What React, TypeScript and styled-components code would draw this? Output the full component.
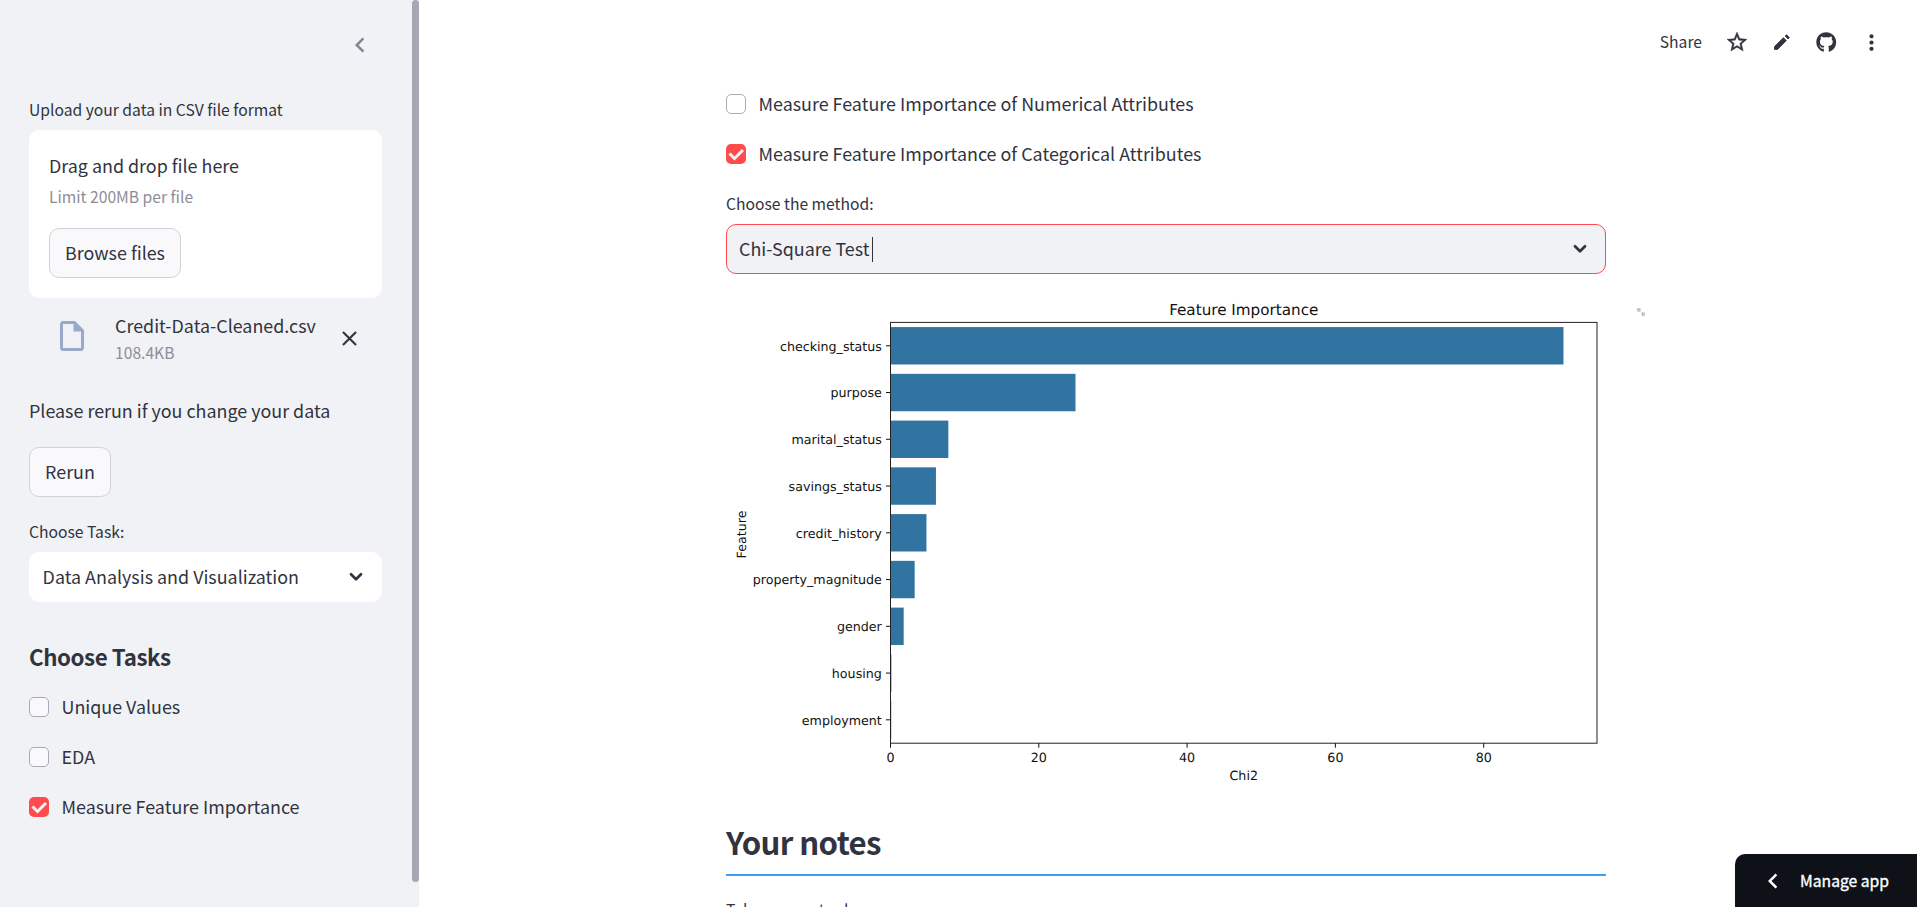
import React from 'react';
import styled, { createGlobalStyle } from 'styled-components';
import { MdChevronLeft, MdClose, MdMoreVert, MdOutlineInsertDriveFile, MdStarOutline } from 'react-icons/md';
import { FaGithub } from 'react-icons/fa';

const ink = '#31333f';
const panel = '#f0f2f6';
const red = '#ff4b4b';
const barBlue = '#3274a1';

const GlobalStyle = createGlobalStyle`
  *, *::before, *::after { box-sizing: border-box; }
  html, body { margin: 0; height: 100%; overflow: hidden; background: #fff; }
  body {
    color: ${ink};
    font-family: "Noto Sans CJK SC", "Noto Sans", sans-serif;
    font-size: 17.9px;
    line-height: 30px;
  }
  svg { display: block; flex: none; }
`;

const Page = styled.div`
  position: relative;
  display: flex;
  width: 100%;
  height: 907px;
  overflow: hidden;
`;

const Sidebar = styled.aside`
  display: flex;
  justify-content: space-between;
  width: 419px;
  height: 100%;
  flex: none;
  background: ${panel};
`;

const SidebarContent = styled.div`
  display: flex;
  flex-direction: column;
  align-items: flex-start;
  width: 353px;
  margin-left: 29px;
`;

const ScrollThumb = styled.div`
  width: 7px;
  height: 882px;
  border-radius: 4px;
  background: #a6a7b0;
`;

const CollapseButton = styled.div`
  align-self: flex-end;
  margin: 30px 7px 0 0;
  color: #808495;
`;

const Label = styled.div<{ $top?: number }>`
  margin-top: ${p => p.$top ?? 0}px;
  height: 28px;
  font-size: 15.66px;
  line-height: 28px;
  white-space: nowrap;
`;

const DropCard = styled.div`
  width: 100%;
  height: 168px;
  margin-top: 6px;
  padding: 20px;
  border-radius: 10px;
  background: #fff;
`;

const Line = styled.div<{ $top?: number }>`
  height: 32px;
  margin-top: ${p => p.$top ?? 0}px;
  white-space: nowrap;
`;

const Muted = styled.div<{ $line: number }>`
  height: 28px;
  font-size: 15.66px;
  line-height: ${p => p.$line}px;
  color: #8d8e95;
`;

const Button = styled.div<{ $width: number; $top: number }>`
  display: flex;
  align-items: center;
  justify-content: center;
  width: ${p => p.$width}px;
  height: 50px;
  margin-top: ${p => p.$top}px;
  padding-bottom: 2px;
  border: 1px solid #d2d3d8;
  border-radius: 10px;
  background: #f9f9fb;
  white-space: nowrap;
`;

const FileRow = styled.div`
  display: flex;
  align-items: flex-start;
  width: 100%;
  height: 77px;
  padding: 12px 20px 0 25px;
`;

const FileIcon = styled.div`
  margin-top: 8px;
  color: #99a9c9;
`;

const FileInfo = styled.div`
  flex: 1;
  margin-left: 25px;
`;

const RemoveIcon = styled.div`
  margin-top: 16px;
`;

const Select = styled.div<{ $focused?: boolean }>`
  display: flex;
  align-items: center;
  justify-content: space-between;
  width: 100%;
  height: 50px;
  margin-top: 6px;
  padding: 0 18px 0 ${p => (p.$focused ? 12 : 12.6)}px;
  border: 1px solid ${p => (p.$focused ? red : '#fff')};
  border-radius: 10px;
  background: ${p => (p.$focused ? panel : '#fff')};
`;

const SelectValue = styled.div`
  display: flex;
  align-items: center;
  gap: 3px;
  padding-bottom: 2px;
  white-space: nowrap;
`;

const Caret = styled.span`
  width: 1px;
  height: 25px;
  margin-top: 2px;
  background: ${ink};
`;

const GroupTitle = styled.h3`
  margin: 41px 0 0;
  font-size: 22.3px;
  font-weight: 700;
  letter-spacing: -0.42px;
  line-height: 26px;
  height: 30px;
`;

const Checks = styled.div<{ $top: number }>`
  display: flex;
  flex-direction: column;
  gap: 18px;
  margin-top: ${p => p.$top}px;
`;

const CheckRow = styled.div`
  display: flex;
  align-items: center;
  gap: 12.5px;
  height: 32px;
  white-space: nowrap;
`;

const CheckText = styled.span`
  padding-bottom: 2px;
`;

const Box = styled.span<{ $on?: boolean; $fill: string }>`
  display: flex;
  align-items: center;
  justify-content: center;
  width: 20px;
  height: 20px;
  border: ${p => (p.$on ? 'none' : '1px solid #a9aab1')};
  border-radius: 5px;
  background: ${p => (p.$on ? red : p.$fill)};
`;

const Main = styled.main`
  flex: 1;
  height: 100%;
  overflow: hidden;
`;

const Block = styled.div`
  width: 880px;
  margin-left: 307px;
`;

const ChartFrame = styled.div`
  position: relative;
  margin-top: 20px;
`;

const Expand = styled.div`
  position: absolute;
  top: 14px;
  left: 911px;
`;

const NotesTitle = styled.h2`
  margin: 26px 0 0;
  height: 59px;
  border-bottom: 2px solid #3d9df3;
  font-size: 31.2px;
  font-weight: 700;
  letter-spacing: -0.62px;
  line-height: 50px;
`;

const Toolbar = styled.div`
  position: absolute;
  top: 28px;
  right: 33px;
  display: flex;
  align-items: center;
  height: 28px;
`;

const Share = styled.span`
  margin-right: 2px;
  font-size: 15.66px;
  line-height: 28px;
`;

const ToolIcon = styled.span`
  display: flex;
  align-items: center;
  justify-content: center;
  width: 25px;
  height: 28px;
  margin-left: 20px;
`;

const Manage = styled.div`
  position: absolute;
  right: 0;
  bottom: 0;
  display: flex;
  align-items: center;
  width: 182px;
  height: 53px;
  padding-left: 23px;
  gap: 12px;
  border-top-left-radius: 10px;
  background: #0e1117;
  color: #fff;
  font-size: 15.7px;
  -webkit-text-stroke: 0.35px #fff;
  white-space: nowrap;
`;

const ArrowDown = () => (
  <svg width="14" height="10" viewBox="0 0 14 10" fill="none" stroke={ink} strokeWidth="2.7" strokeLinecap="round" strokeLinejoin="round">
    <path d="M2 2.2 7 7.2 12 2.2" />
  </svg>
);

const Pencil = () => (
  <svg width="16" height="16" viewBox="0 0 16 16" fill={ink} stroke={ink} strokeWidth="0.8" strokeLinejoin="round">
    <path d="M.5 15.500v-3L9.400 3.700l2.900 2.900-8.800 8.900zM11.100 2.100 12.500.700l2.900 2.900L14 5z" />
  </svg>
);

const Check = ({ label, on, fill }: { label: string; on?: boolean; fill: string }) => (
  <CheckRow>
    <Box $on={on} $fill={fill}>
      {on && (
        <svg width="17" height="13" viewBox="0 0 17 13" fill={panel}>
          <path d="M6.5 12.6.4 6.6 2.6 4.4 6.5 8.4 13.9.9 16.1 3.1Z" />
        </svg>
      )}
    </Box>
    <CheckText>{label}</CheckText>
  </CheckRow>
);

const data = [
  { name: 'checking_status', value: 90.76 },
  { name: 'purpose', value: 24.95 },
  { name: 'marital_status', value: 7.8 },
  { name: 'savings_status', value: 6.13 },
  { name: 'credit_history', value: 4.85 },
  { name: 'property_magnitude', value: 3.26 },
  { name: 'gender', value: 1.78 },
  { name: 'housing', value: 0.12 },
  { name: 'employment', value: 0.1 },
];

const axis = { left: 164.5, right: 871, top: 28.4, bottom: 449.2 };
const unit = 7.415;
const step = (axis.bottom - axis.top) / data.length;

const Chart = () => (
  <svg width="880" height="497" viewBox="0 0 880 497" fontFamily='"DejaVu Sans", sans-serif' fontSize="12.66" fill="#111" textRendering="geometricPrecision">
    <text x={(axis.left + axis.right) / 2} y="20.9" fontSize="15.19" textAnchor="middle">Feature Importance</text>
    {data.map((d, i) => {
      const y = axis.top + step * (i + 0.5);
      return (
        <g key={d.name}>
          <rect x={axis.left} y={y - step * 0.4} width={d.value * unit} height={step * 0.8} fill={barBlue} />
          <path d={`M${axis.left} ${y}h-4.5`} stroke="#111" />
          <text x={axis.left - 8.7} y={y + 4.9} textAnchor="end">{d.name}</text>
        </g>
      );
    })}
    <rect x={axis.left} y={axis.top} width={axis.right - axis.left} height={axis.bottom - axis.top} fill="none" stroke="#222" />
    {[0, 20, 40, 60, 80].map(v => (
      <g key={v}>
        <path d={`M${axis.left + v * unit} ${axis.bottom}v4.5`} stroke="#111" />
        <text x={axis.left + v * unit} y="468.2" textAnchor="middle">{v}</text>
      </g>
    ))}
    <text x={(axis.left + axis.right) / 2} y="486" textAnchor="middle">Chi2</text>
    <text transform="translate(20 240.500) rotate(-90)" textAnchor="middle">Feature</text>
  </svg>
);

export default function App() {
  return (
    <Page>
      <GlobalStyle />
      <Sidebar>
        <SidebarContent>
          <CollapseButton><MdChevronLeft size={30} /></CollapseButton>
          <Label $top={36}>Upload your data in CSV file format</Label>
          <DropCard>
            <Line>Drag and drop file here</Line>
            <Muted $line={30}>Limit 200MB per file</Muted>
            <Button $width={132} $top={18}>Browse files</Button>
          </DropCard>
          <FileRow>
            <FileIcon><MdOutlineInsertDriveFile size={36} /></FileIcon>
            <FileInfo>
              <Line>Credit-Data-Cleaned.csv</Line>
              <Muted $line={22}>108.4KB</Muted>
            </FileInfo>
            <RemoveIcon><MdClose size={25} /></RemoveIcon>
          </FileRow>
          <Line $top={20}>Please rerun if you change your data</Line>
          <Button $width={82} $top={20}>Rerun</Button>
          <Label $top={21}>Choose Task:</Label>
          <Select>
            <SelectValue>Data Analysis and Visualization</SelectValue>
            <ArrowDown />
          </Select>
          <GroupTitle>Choose Tasks</GroupTitle>
          <Checks $top={18}>
            <Check label="Unique Values" fill="#f9f9fb" />
            <Check label="EDA" fill="#f9f9fb" />
            <Check label="Measure Feature Importance" fill="#f9f9fb" on />
          </Checks>
        </SidebarContent>
        <ScrollThumb />
      </Sidebar>
      <Main>
        <Block>
          <Checks $top={88}>
            <Check label="Measure Feature Importance of Numerical Attributes" fill="#fff" />
            <Check label="Measure Feature Importance of Categorical Attributes" fill="#fff" on />
          </Checks>
          <Label $top={20}>Choose the method:</Label>
          <Select $focused>
            <SelectValue>Chi-Square Test<Caret /></SelectValue>
            <ArrowDown />
          </Select>
          <ChartFrame>
            <Chart />
            <Expand>
              <svg width="8" height="8" viewBox="0 0 8 8" fill="#c4c4c4">
                <path d="M0 0h4L2.900 1.100 4.200 2.400 2.400 4.200 1.100 2.900 0 4zM8 8H4l1.100-1.100L3.800 5.600 5.600 3.800 6.900 5.100 8 4z" />
              </svg>
            </Expand>
          </ChartFrame>
          <NotesTitle>Your notes</NotesTitle>
          <Label $top={20}>Take your notes here</Label>
        </Block>
      </Main>
      <Toolbar>
        <Share>Share</Share>
        <ToolIcon><MdStarOutline size={24} stroke={ink} strokeWidth={0.4} /></ToolIcon>
        <ToolIcon><Pencil /></ToolIcon>
        <ToolIcon><FaGithub size={20.5} /></ToolIcon>
        <ToolIcon><MdMoreVert size={25} /></ToolIcon>
      </Toolbar>
      <Manage>
        <MdChevronLeft size={30} />
        Manage app
      </Manage>
    </Page>
  );
}
